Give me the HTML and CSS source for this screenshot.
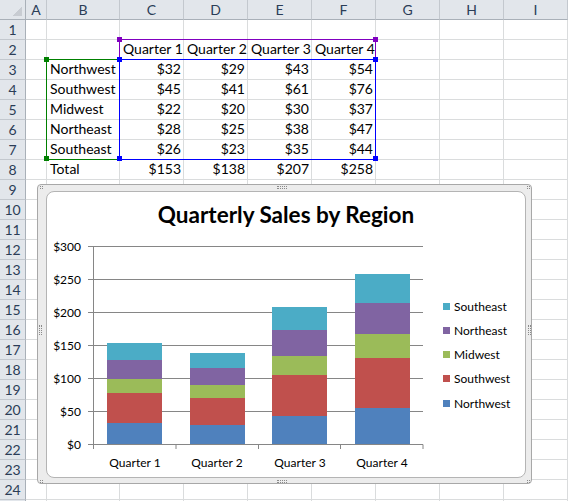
FILE: index.html
```html
<!DOCTYPE html>
<html>
<head>
<meta charset="utf-8">
<title>Quarterly Sales</title>
<link rel="stylesheet" href="styles.css">
</head>
<body>
<div class="sheet">
  <div class="row hdr"><div class="corner"></div><div>A</div><div>B</div><div>C</div><div>D</div><div>E</div><div>F</div><div>G</div><div>H</div><div>I</div></div>
  <div class="row"><div class="rh">1</div><div></div><div></div><div></div><div></div><div></div><div></div><div></div><div></div><div></div></div>
  <div class="row"><div class="rh">2</div><div></div><div></div><div>Quarter 1</div><div>Quarter 2</div><div>Quarter 3</div><div>Quarter 4</div><div></div><div></div><div></div></div>
  <div class="row"><div class="rh">3</div><div></div><div>Northwest</div><div class="n">$32</div><div class="n">$29</div><div class="n">$43</div><div class="n">$54</div><div></div><div></div><div></div></div>
  <div class="row"><div class="rh">4</div><div></div><div>Southwest</div><div class="n">$45</div><div class="n">$41</div><div class="n">$61</div><div class="n">$76</div><div></div><div></div><div></div></div>
  <div class="row"><div class="rh">5</div><div></div><div>Midwest</div><div class="n">$22</div><div class="n">$20</div><div class="n">$30</div><div class="n">$37</div><div></div><div></div><div></div></div>
  <div class="row"><div class="rh">6</div><div></div><div>Northeast</div><div class="n">$28</div><div class="n">$25</div><div class="n">$38</div><div class="n">$47</div><div></div><div></div><div></div></div>
  <div class="row"><div class="rh">7</div><div></div><div>Southeast</div><div class="n">$26</div><div class="n">$23</div><div class="n">$35</div><div class="n">$44</div><div></div><div></div><div></div></div>
  <div class="row"><div class="rh">8</div><div></div><div>Total</div><div class="n">$153</div><div class="n">$138</div><div class="n">$207</div><div class="n">$258</div><div></div><div></div><div></div></div>
  <div class="row"><div class="rh">9</div><div></div><div></div><div></div><div></div><div></div><div></div><div></div><div></div><div></div></div>
  <div class="row"><div class="rh">10</div><div></div><div></div><div></div><div></div><div></div><div></div><div></div><div></div><div></div></div>
  <div class="row"><div class="rh">11</div><div></div><div></div><div></div><div></div><div></div><div></div><div></div><div></div><div></div></div>
  <div class="row"><div class="rh">12</div><div></div><div></div><div></div><div></div><div></div><div></div><div></div><div></div><div></div></div>
  <div class="row"><div class="rh">13</div><div></div><div></div><div></div><div></div><div></div><div></div><div></div><div></div><div></div></div>
  <div class="row"><div class="rh">14</div><div></div><div></div><div></div><div></div><div></div><div></div><div></div><div></div><div></div></div>
  <div class="row"><div class="rh">15</div><div></div><div></div><div></div><div></div><div></div><div></div><div></div><div></div><div></div></div>
  <div class="row"><div class="rh">16</div><div></div><div></div><div></div><div></div><div></div><div></div><div></div><div></div><div></div></div>
  <div class="row"><div class="rh">17</div><div></div><div></div><div></div><div></div><div></div><div></div><div></div><div></div><div></div></div>
  <div class="row"><div class="rh">18</div><div></div><div></div><div></div><div></div><div></div><div></div><div></div><div></div><div></div></div>
  <div class="row"><div class="rh">19</div><div></div><div></div><div></div><div></div><div></div><div></div><div></div><div></div><div></div></div>
  <div class="row"><div class="rh">20</div><div></div><div></div><div></div><div></div><div></div><div></div><div></div><div></div><div></div></div>
  <div class="row"><div class="rh">21</div><div></div><div></div><div></div><div></div><div></div><div></div><div></div><div></div><div></div></div>
  <div class="row"><div class="rh">22</div><div></div><div></div><div></div><div></div><div></div><div></div><div></div><div></div><div></div></div>
  <div class="row"><div class="rh">23</div><div></div><div></div><div></div><div></div><div></div><div></div><div></div><div></div><div></div></div>
  <div class="row"><div class="rh">24</div><div></div><div></div><div></div><div></div><div></div><div></div><div></div><div></div><div></div></div>
  <div class="row"><div class="rh"></div><div></div><div></div><div></div><div></div><div></div><div></div><div></div><div></div><div></div></div>
</div>

<div class="sel sel-purple"></div>
<div class="sel sel-blue"></div>
<div class="sel sel-green"></div>
<div class="hd hd-purple" style="left:117px;top:37px"></div>
<div class="hd hd-purple" style="left:373px;top:37px"></div>
<div class="hd hd-green" style="left:44px;top:57px"></div>
<div class="hd hd-green" style="left:44px;top:156px"></div>
<div class="hd hd-blue" style="left:117px;top:57px"></div>
<div class="hd hd-blue" style="left:373px;top:57px"></div>
<div class="hd hd-blue" style="left:117px;top:156px"></div>
<div class="hd hd-blue" style="left:373px;top:156px"></div>

<div class="chart">
  <span class="grip grip-top"></span>
  <span class="grip grip-bottom"></span>
  <span class="grip grip-left"></span>
  <span class="grip grip-right"></span>
  <span class="grip-corner gc-tl"></span>
  <span class="grip-corner gc-tr"></span>
  <span class="grip-corner gc-bl"></span>
  <span class="grip-corner gc-br"></span>
  <div class="chart-inner">
    <svg class="plot" width="478" height="285" viewBox="0 0 478 285">
      <text class="title" x="239" y="31" text-anchor="middle">Quarterly Sales by Region</text>
      <g class="grid">
        <line x1="41" y1="54.5" x2="376" y2="54.5"/>
        <line x1="41" y1="87.5" x2="376" y2="87.5"/>
        <line x1="41" y1="120.5" x2="376" y2="120.5"/>
        <line x1="41" y1="153.5" x2="376" y2="153.5"/>
        <line x1="41" y1="186.5" x2="376" y2="186.5"/>
        <line x1="41" y1="219.5" x2="376" y2="219.5"/>
      </g>
      <g>
        <rect x="60" y="231" width="55" height="21" fill="#4f81bd"/>
        <rect x="60" y="201" width="55" height="30" fill="#c0504d"/>
        <rect x="60" y="187" width="55" height="14" fill="#9bbb59"/>
        <rect x="60" y="168" width="55" height="19" fill="#8064a2"/>
        <rect x="60" y="151" width="55" height="17" fill="#4bacc6"/>

        <rect x="143" y="233" width="55" height="19" fill="#4f81bd"/>
        <rect x="143" y="206" width="55" height="27" fill="#c0504d"/>
        <rect x="143" y="193" width="55" height="13" fill="#9bbb59"/>
        <rect x="143" y="176" width="55" height="17" fill="#8064a2"/>
        <rect x="143" y="161" width="55" height="15" fill="#4bacc6"/>

        <rect x="225" y="224" width="55" height="28" fill="#4f81bd"/>
        <rect x="225" y="183" width="55" height="41" fill="#c0504d"/>
        <rect x="225" y="164" width="55" height="19" fill="#9bbb59"/>
        <rect x="225" y="138" width="55" height="26" fill="#8064a2"/>
        <rect x="225" y="115" width="55" height="23" fill="#4bacc6"/>

        <rect x="308" y="216" width="55" height="36" fill="#4f81bd"/>
        <rect x="308" y="166" width="55" height="50" fill="#c0504d"/>
        <rect x="308" y="142" width="55" height="24" fill="#9bbb59"/>
        <rect x="308" y="111" width="55" height="31" fill="#8064a2"/>
        <rect x="308" y="82" width="55" height="29" fill="#4bacc6"/>
      </g>
      <g class="grid">
        <line x1="41" y1="252.5" x2="376" y2="252.5"/>
        <line x1="46.5" y1="54.5" x2="46.5" y2="257"/>
        <line x1="129" y1="252.5" x2="129" y2="257"/>
        <line x1="211.5" y1="252.5" x2="211.5" y2="257"/>
        <line x1="293.5" y1="252.5" x2="293.5" y2="257"/>
        <line x1="376" y1="252.5" x2="376" y2="257"/>
      </g>
      <g class="ylab" text-anchor="end">
        <text x="34" y="58.5">$300</text>
        <text x="34" y="91.5">$250</text>
        <text x="34" y="124.5">$200</text>
        <text x="34" y="157.5">$150</text>
        <text x="34" y="190.5">$100</text>
        <text x="34" y="223.5">$50</text>
        <text x="34" y="256.5">$0</text>
      </g>
      <g class="xlab" text-anchor="middle">
        <text x="88" y="275">Quarter 1</text>
        <text x="170" y="275">Quarter 2</text>
        <text x="253" y="275">Quarter 3</text>
        <text x="335" y="275">Quarter 4</text>
      </g>
      <g class="legend">
        <rect x="396" y="111" width="7" height="7" fill="#4bacc6"/>
        <text x="407" y="119">Southeast</text>
        <rect x="396" y="135" width="7" height="7" fill="#8064a2"/>
        <text x="407" y="143">Northeast</text>
        <rect x="396" y="159" width="7" height="7" fill="#9bbb59"/>
        <text x="407" y="167">Midwest</text>
        <rect x="396" y="183" width="7" height="7" fill="#c0504d"/>
        <text x="407" y="191">Southwest</text>
        <rect x="396" y="208" width="7" height="7" fill="#4f81bd"/>
        <text x="407" y="216">Northwest</text>
      </g>
    </svg>
  </div>
</div>
</body>
</html>
```
FILE: styles.css
```css
html, body {
  margin: 0;
  padding: 0;
  background: #ffffff;
}
body {
  width: 568px;
  height: 501px;
  overflow: hidden;
  position: relative;
  font-family: "Lato", "Liberation Sans", sans-serif;
  font-size: 14px;
  color: #000000;
}
.sheet {
  display: flex;
  flex-direction: column;
}
.row {
  display: grid;
  grid-template-columns: 26px 21px 73px repeat(7, 64px);
  height: 20px;
  flex: none;
}
.row > div {
  box-sizing: border-box;
  border-right: 1px solid #dadcdd;
  border-bottom: 1px solid #dadcdd;
  white-space: nowrap;
  overflow: hidden;
  display: flex;
  align-items: flex-end;
  padding: 0 3px 2px 3px;
  line-height: 16px;
}
.row > div.n {
  justify-content: flex-end;
  padding-right: 2px;
}
.row.hdr > div {
  background: #e2e6eb;
  border-right: 1px solid #c3c8ce;
  border-bottom: 1px solid #a9b0b8;
  color: #2b3d57;
  justify-content: center;
  align-items: center;
  padding: 0;
}
.row.hdr > div.corner {
  border-right: 1px solid #a9b0b8;
  background: linear-gradient(135deg, #e2e6eb 60%, #c8ccd2 60%);
  background-size: 12px 12px;
  background-repeat: no-repeat;
  background-position: right 3px bottom 3px;
  background-color: #e2e6eb;
}
.row > div.rh {
  background: #e2e6eb;
  border-right: 1px solid #a9b0b8;
  border-bottom: 1px solid #c3c8ce;
  color: #2b3d57;
  justify-content: center;
  align-items: center;
  padding: 0;
}

.sel {
  position: absolute;
  box-sizing: border-box;
}
.sel-purple {
  left: 119px;
  top: 39px;
  width: 257px;
  height: 21px;
  border: 1px solid #8000c0;
}
.sel-green {
  left: 46px;
  top: 59px;
  width: 74px;
  height: 101px;
  border: 1px solid #008000;
  border-right: none;
}
.sel-blue {
  left: 119px;
  top: 59px;
  width: 257px;
  height: 101px;
  border: 1px solid #0000ff;
}
.hd {
  position: absolute;
  width: 5px;
  height: 5px;
}
.hd-purple { background: #8000c0; }
.hd-green { background: #008000; }
.hd-blue { background: #0000ff; }

.chart {
  position: absolute;
  left: 37px;
  top: 184px;
  width: 495px;
  height: 300px;
  box-sizing: border-box;
  border: 1px solid #a8a8a8;
  border-radius: 4px;
  background: #ececec;
  padding: 6px 5px 5px 8px;
}
.chart-inner {
  box-sizing: border-box;
  width: 480px;
  height: 287px;
  background: #ffffff;
  border: 1px solid #b4b4b4;
  border-radius: 8px;
}
.plot {
  display: block;
}
.plot text {
  font-family: "Lato", "Liberation Sans", sans-serif;
  fill: #000000;
}
.plot .title {
  font-size: 22.5px;
  font-weight: 700;
}
.plot .ylab text,
.plot .xlab text,
.plot .legend text {
  font-size: 12px;
}
.grid line {
  stroke: #868686;
  stroke-width: 1;
}
.grip {
  position: absolute;
  box-sizing: border-box;
}
.grip-top, .grip-bottom {
  left: 239px;
  width: 10px;
  height: 3px;
  border-top: 1px dotted #8a8a8a;
  border-bottom: 1px dotted #8a8a8a;
}
.grip-top { top: 1px; }
.grip-bottom { bottom: 0px; }
.grip-left, .grip-right {
  top: 140px;
  width: 3px;
  height: 10px;
  border-left: 1px dotted #8a8a8a;
  border-right: 1px dotted #8a8a8a;
}
.grip-left { left: 1px; }
.grip-right { right: 0px; }
.grip-corner {
  position: absolute;
  width: 3px;
  height: 3px;
  box-sizing: border-box;
  border-top: 1px dotted #8a8a8a;
  border-bottom: 1px dotted #8a8a8a;
}
.gc-tl { left: 2px; top: 1px; }
.gc-tr { right: 1px; top: 1px; }
.gc-bl { left: 2px; bottom: 0px; }
.gc-br { right: 1px; bottom: 0px; }
```
